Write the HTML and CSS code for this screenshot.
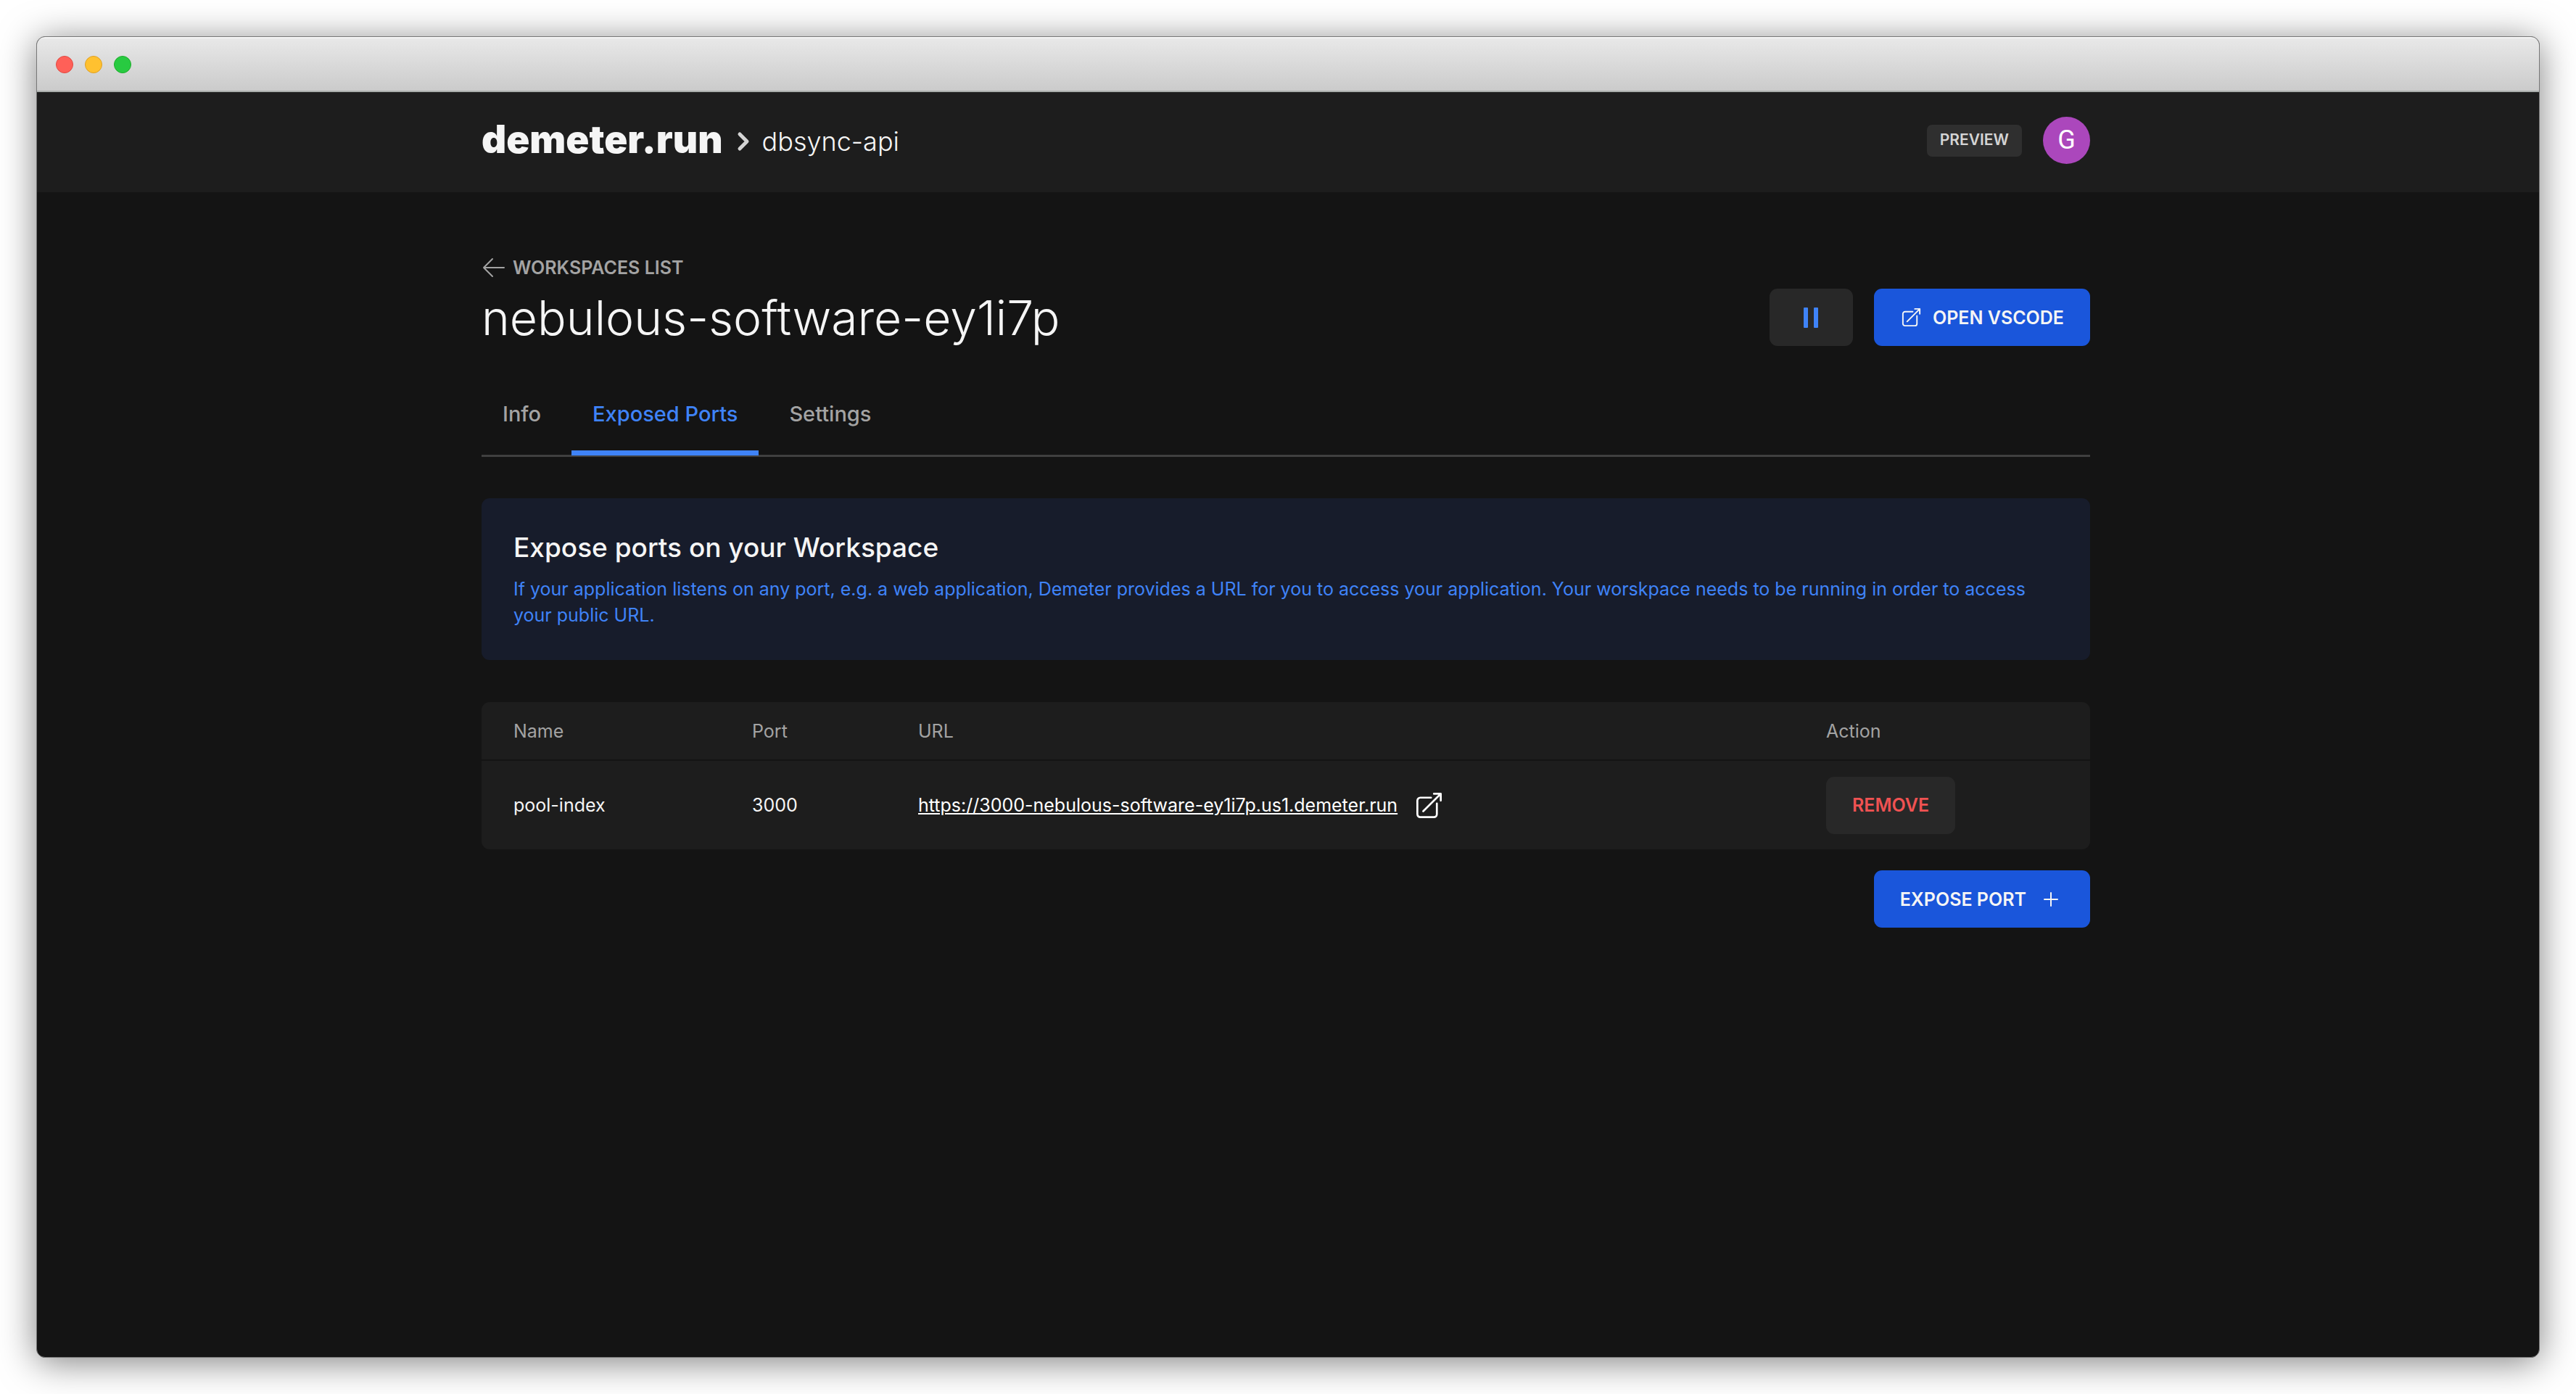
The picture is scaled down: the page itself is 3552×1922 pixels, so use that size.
FILE: index.html
```html
<!DOCTYPE html>
<html lang="en">
<head>
<meta charset="utf-8">
<title>nebulous-software-ey1i7p · demeter.run</title>
<link rel="stylesheet" href="styles.css">
</head>
<body>
<div class="window">
  <div class="titlebar">
    <span class="light light-close"></span>
    <span class="light light-minimize"></span>
    <span class="light light-zoom"></span>
  </div>
  <header class="header">
    <div class="container header-row">
      <nav class="crumbs">
        <a class="brand" href="#">demeter.run</a>
        <svg class="chevron" viewBox="0 0 18 28" aria-hidden="true"><path d="M4 4l10 10L4 24"/></svg>
        <a class="project" href="#">dbsync-api</a>
      </nav>
      <div class="account">
        <span class="badge">PREVIEW</span>
        <button class="avatar" type="button">G</button>
      </div>
    </div>
  </header>
  <main class="main">
    <div class="container">
      <a class="back" href="#">
        <svg class="back-icon" viewBox="0 0 32 28" aria-hidden="true"><path d="M15 2L3 14l12 12M3 14h28"/></svg>
        WORKSPACES LIST
      </a>
      <div class="title-row">
        <h1 class="title">nebulous-software-ey1i7p</h1>
        <div class="actions">
          <button class="btn btn-dark btn-pause" type="button" aria-label="Pause">
            <svg class="pause-icon" viewBox="0 0 20 28" aria-hidden="true"><rect width="6" height="28" rx="1"/><rect x="14" width="6" height="28" rx="1"/></svg>
          </button>
          <button class="btn btn-primary" type="button">
            <svg class="open-icon" viewBox="0 0 24 24" stroke-width="1.5" aria-hidden="true"><path d="M13.500 6H5.250A2.250 2.250 0 003 8.250v10.500A2.250 2.250 0 005.250 21h10.500A2.250 2.250 0 0018 18.750V10.500m-10.500 6L21 3m0 0h-5.250M21 3v5.250"/></svg>
            OPEN VSCODE
          </button>
        </div>
      </div>
      <nav class="tabs">
        <a class="tab" href="#">Info</a>
        <a class="tab tab-active" href="#" aria-current="page">Exposed Ports</a>
        <a class="tab" href="#">Settings</a>
      </nav>
      <section class="notice">
        <h2 class="notice-title">Expose ports on your Workspace</h2>
        <p class="notice-text">If your application listens on any port, e.g. a web application, Demeter provides a URL for you to access your application. Your worskpace needs to be running in order to access your public URL.</p>
      </section>
      <table class="ports">
        <thead>
          <tr><th class="col-name">Name</th><th class="col-port">Port</th><th class="col-url">URL</th><th class="col-action">Action</th></tr>
        </thead>
        <tbody>
          <tr>
            <td>pool-index</td>
            <td>3000</td>
            <td>
              <a class="url" href="#"><span class="url-text">https://3000-nebulous-software-ey1i7p.us1.demeter.run</span>
                <svg class="url-icon" viewBox="0 0 24 24" stroke-width="1.5" aria-hidden="true"><path d="M13.500 6H5.250A2.250 2.250 0 003 8.250v10.500A2.250 2.250 0 005.250 21h10.500A2.250 2.250 0 0018 18.750V10.500m-10.500 6L21 3m0 0h-5.250M21 3v5.250"/></svg>
              </a>
            </td>
            <td><button class="btn btn-dark btn-remove" type="button">REMOVE</button></td>
          </tr>
        </tbody>
      </table>
      <div class="footer-row">
        <button class="btn btn-primary" type="button">
          EXPOSE PORT
          <svg class="plus-icon" viewBox="0 0 20 20" aria-hidden="true"><path d="M10 1v18M1 10h18"/></svg>
        </button>
      </div>
    </div>
  </main>
</div>
</body>
</html>
```

FILE: styles.css
```css
* {
  box-sizing: border-box;
}

body {
  margin: 0;
  padding: 50px;
  min-height: 100vh;
  display: flex;
  background: #fff;
  color: #f5f5f5;
  font: 400 25px/36px Inter, "Liberation Sans", sans-serif;
}

a {
  color: inherit;
  text-decoration: none;
}

button {
  font: inherit;
  border: 0;
  padding: 0;
  cursor: pointer;
}

svg {
  flex: none;
  fill: none;
  stroke: currentColor;
  stroke-linecap: round;
  stroke-linejoin: round;
}

.window {
  flex: 1;
  border: 1px solid #777;
  border-radius: 12px;
  overflow: hidden;
  background: #141414;
  box-shadow: 0 6px 50px rgba(0, 0, 0, 0.5);
}

.titlebar {
  height: 76px;
  display: flex;
  align-items: center;
  gap: 16px;
  padding-left: 26px;
  background: linear-gradient(#e8e8e8, #cbcbcb);
  border-top: 2px solid #f4f4f4;
  border-bottom: 2px solid #a9adab;
}

.light {
  width: 24px;
  height: 24px;
  border-radius: 50%;
  border: 1px solid;
}

.light-close {
  background: #ff6058;
  border-color: #e14942;
}

.light-minimize {
  background: #ffc130;
  border-color: #dfa023;
}

.light-zoom {
  background: #28ca41;
  border-color: #1dad2b;
}

.container {
  max-width: 2218px;
  margin: 0 auto;
}

.header {
  background: #1d1d1d;
  padding: 34px 6px 39px 0;
}

.header-row {
  display: flex;
  align-items: center;
  justify-content: space-between;
}

.crumbs {
  display: flex;
  align-items: center;
}

.brand {
  padding-bottom: 3px;
  font-size: 53px;
  font-weight: 900;
  line-height: 62px;
}

.chevron {
  width: 18px;
  height: 28px;
  margin: 3px 17px 0 19px;
  stroke: #d4d4d4;
  stroke-width: 5px;
}

.project {
  padding-top: 3px;
  font-size: 36px;
  font-weight: 300;
  line-height: 50px;
}

.account {
  display: flex;
  align-items: center;
  gap: 29px;
}

.badge {
  padding: 3px 18px 5px;
  border-radius: 7px;
  background: #2f2f2f;
  color: #d4d4d4;
  font-size: 21px;
  font-weight: 600;
}

.avatar {
  width: 65px;
  height: 65px;
  border-radius: 50%;
  background: #ab47bc;
  color: #fff;
  font: 400 36px/65px Roboto, sans-serif;
}

.main {
  padding: 86px 6px 87px 0;
}

.back {
  display: flex;
  width: fit-content;
  align-items: center;
  gap: 11px;
  color: #a3a3a3;
  font-weight: 600;
}

.back-icon {
  width: 32px;
  height: 28px;
  stroke-width: 2px;
}

.title-row {
  display: flex;
  align-items: center;
  justify-content: space-between;
  margin-top: 11px;
}

.title {
  margin: 0;
  font-size: 66px;
  font-weight: 300;
  line-height: 72px;
}

.actions {
  display: flex;
  gap: 29px;
}

.btn {
  height: 79px;
  display: inline-flex;
  align-items: center;
  justify-content: center;
  padding: 0 36px;
  border-radius: 11px;
  font-weight: 600;
}

.btn-dark {
  background: #282828;
}

.btn-primary {
  background: #1a56db;
  color: #f5f5f5;
  min-width: 298px;
}

.btn-pause {
  width: 115px;
}

.btn-remove {
  color: #f05252;
}

.pause-icon {
  width: 20px;
  height: 28px;
  fill: #3f83f8;
  stroke: none;
}

.open-icon {
  width: 31px;
  height: 31px;
  margin-right: 14px;
}

.plus-icon {
  width: 20px;
  height: 20px;
  margin: 0 8px 0 24px;
  stroke-width: 2px;
}

.tabs {
  display: flex;
  gap: 13px;
  margin-top: 43px;
  border-bottom: 3px solid #404040;
}

.tab {
  padding: 29px;
  margin-bottom: -1px;
  border-bottom: 7px solid transparent;
  color: #a3a3a3;
  font-size: 29px;
  font-weight: 500;
  line-height: 43px;
}

.tab-active {
  color: #3f83f8;
  border-color: #3f83f8;
}

.notice {
  margin-top: 57px;
  padding: 43px 44px 44px;
  border-radius: 11px;
  background: #171c2b;
}

.notice-title {
  margin: 0 0 14px;
  font-size: 37px;
  font-weight: 500;
  line-height: 50px;
}

.notice-text {
  margin: 0;
  color: #3f83f8;
}

.ports {
  width: 100%;
  margin-top: 58px;
  border-spacing: 0;
  table-layout: fixed;
  background: #1d1d1d;
  border-radius: 11px;
  text-align: left;
}

.ports th {
  height: 81px;
  padding: 0 0 0 44px;
  border-bottom: 2px solid #141414;
  color: #a3a3a3;
  font-weight: 400;
}

.ports td {
  height: 122px;
  padding: 0 0 0 44px;
}

.col-name {
  width: 329px;
}

.col-port {
  width: 229px;
}

.col-action {
  width: 408px;
}

.url {
  display: flex;
  align-items: center;
  color: #fff;
}

.url-text {
  text-decoration: underline;
}

.url-icon {
  width: 43px;
  height: 43px;
  margin-left: 22px;
}

.footer-row {
  display: flex;
  justify-content: flex-end;
  margin-top: 29px;
}
```
